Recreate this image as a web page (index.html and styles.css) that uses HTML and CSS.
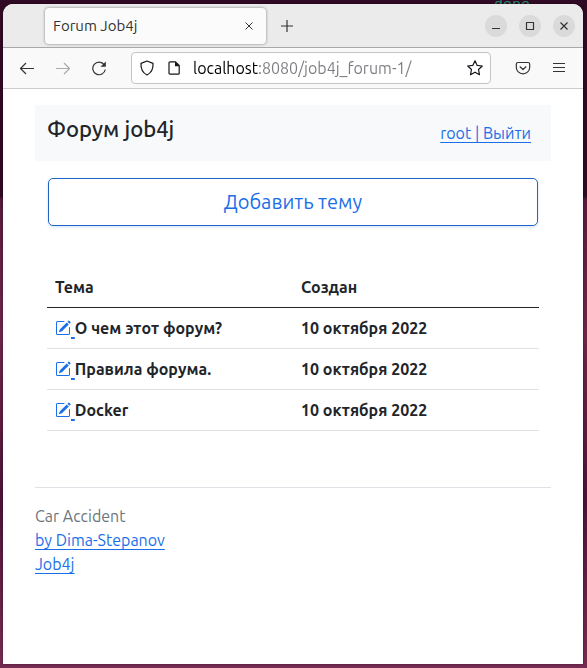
FILE: index.html
```html
<!DOCTYPE html>
<html lang="ru">
<head>
<meta charset="utf-8">
<meta name="viewport" content="width=device-width, initial-scale=1">
<title>Forum Job4j</title>
<link rel="stylesheet" href="styles.css">
</head>
<body>
<svg class="sprite" aria-hidden="true">
  <symbol id="pencil" viewBox="0 0 16 16">
    <path fill="currentColor" d="M15.5 1.94a.5.5 0 0 1 0 .706L14.459 3.69l-2-2L13.502.646a.5.5 0 0 1 .707 0l1.293 1.293zm-1.75 2.456-2-2L4.939 9.21a.5.5 0 0 0-.121.196l-.805 2.414a.25.25 0 0 0 .316.316l2.414-.805a.5.5 0 0 0 .196-.12l6.813-6.814z"/>
    <path fill="currentColor" fill-rule="evenodd" d="M1 13.5A1.5 1.5 0 0 0 2.5 15h11a1.5 1.5 0 0 0 1.5-1.5v-6a.5.5 0 0 0-1 0v6a.5.5 0 0 1-.5.5h-11a.5.5 0 0 1-.5-.5v-11a.5.5 0 0 1 .5-.5H9a.5.5 0 0 0 0-1H2.500A1.500 1.500 0 0 0 1 2.500v11z"/>
  </symbol>
</svg>
<div class="terminal"><span>done</span></div>
<div class="window">
  <div class="tabstrip">
    <div class="tab">
      <span class="tab-title">Forum Job4j</span>
      <button class="tab-close" aria-label="Close tab"><svg width="10" height="10" viewBox="0 0 10 10"><path d="M1.500 1.500l7 7M8.500 1.500l-7 7"/></svg></button>
    </div>
    <button class="new-tab" aria-label="New tab"><svg width="14" height="14" viewBox="0 0 14 14"><path d="M7 1v12M1 7h12"/></svg></button>
    <div class="controls">
      <button aria-label="Minimize"><svg width="10" height="10" viewBox="0 0 10 10"><path d="M1 7.500h8"/></svg></button>
      <button aria-label="Maximize"><svg width="10" height="10" viewBox="0 0 10 10"><path d="M1.500 1.500h7v7h-7z"/></svg></button>
      <button aria-label="Close"><svg width="10" height="10" viewBox="0 0 10 10"><path d="M1.500 1.500l7 7M8.500 1.500l-7 7"/></svg></button>
    </div>
  </div>
  <div class="toolbar">
    <div class="nav">
      <button aria-label="Back"><svg width="16" height="16" viewBox="0 0 16 16"><path d="M15 8.500H1.500M7 3L1.500 8.500 7 14"/></svg></button>
      <button aria-label="Forward" disabled><svg width="16" height="16" viewBox="0 0 16 16"><path d="M1 8.500h13.500M9 3L14.500 8.500 9 14"/></svg></button>
      <button aria-label="Reload"><svg width="16" height="16" viewBox="0 0 16 16"><path d="M13.200 4.700A6.300 6.300 0 1 0 14.300 9.500"/><path class="solid" d="M14.800 1.500v5.200H9.500z"/></svg></button>
    </div>
    <div class="address">
      <svg width="16" height="16" viewBox="0 0 16 16"><path d="M8 1L14 3.400C14.400 9 12 13 8 15 4 13 1.600 9 2 3.400z"/></svg>
      <svg width="14" height="16" viewBox="0 0 14 16"><path d="M3 1.800h5.500l3.700 3.700v7.700a1 1 0 0 1-1 1H3a1 1 0 0 1-1-1V2.800a1 1 0 0 1 1-1z"/><path class="solid" d="M8 1.500v4.700h4.500z"/></svg>
      <input type="text" aria-label="Address" value="localhost:8080/job4j_forum-1/">
      <button aria-label="Bookmark"><svg width="18" height="18" viewBox="0 0 18 18"><path d="M9 1.700l2.200 4.700 5.100.6-3.800 3.500 1 5.200L9 13.200l-4.500 2.500 1-5.200L1.700 7l5.100-.6z"/></svg></button>
    </div>
    <div class="extras">
      <button aria-label="Save to Pocket"><svg width="16" height="16" viewBox="0 0 16 16"><path d="M3 2.500h10a1.700 1.700 0 0 1 1.700 1.700v3a6.700 6.700 0 0 1-13.400 0v-3A1.700 1.700 0 0 1 3 2.500zM4.800 6.500L8 9.500l3.200-3"/></svg></button>
      <button aria-label="Menu"><svg width="14" height="14" viewBox="0 0 14 14"><path d="M1 2.500h12M1 6.500h12M1 10.500h12"/></svg></button>
    </div>
  </div>
  <div class="page">
    <header class="site-header">
      <h1>Форум job4j</h1>
      <a href="#logout">root | Выйти</a>
    </header>
    <main>
      <button class="add">Добавить тему</button>
      <table>
        <thead><tr><th scope="col">Тема</th><th scope="col">Создан</th></tr></thead>
        <tbody>
          <tr><td><a href="#1" aria-label="Править"><svg class="edit"><use href="#pencil"/></svg>&nbsp;</a>О чем этот форум?</td><td>10 октября 2022</td></tr>
          <tr><td><a href="#2" aria-label="Править"><svg class="edit"><use href="#pencil"/></svg>&nbsp;</a>Правила форума.</td><td>10 октября 2022</td></tr>
          <tr><td><a href="#3" aria-label="Править"><svg class="edit"><use href="#pencil"/></svg>&nbsp;</a>Docker</td><td>10 октября 2022</td></tr>
        </tbody>
      </table>
    </main>
    <footer>
      <span>Car Accident</span>
      <a href="#author">by Dima-Stepanov</a>
      <a href="#job4j">Job4j</a>
    </footer>
  </div>
</div>
</body>
</html>
```
FILE: styles.css
```css
* { box-sizing: border-box; }
body {
  margin: 0;
  min-height: 100vh;
  padding: 0 4px 4px 3px;
  display: flex;
  flex-direction: column;
  background: linear-gradient(#300a24 196px, #571a3e 200px, #6c2549 50%, #4c1238 75%, #762b53);
  color: #212529;
  font: 16px/24px Ubuntu, "Noto Sans", sans-serif;
}
.sprite { position: absolute; width: 0; height: 0; }
/* Strip of the terminal that shows above the browser window */
.terminal { height: 4px; padding-right: 53px; overflow: hidden; text-align: right; font: 15px/12px "Liberation Mono", monospace; color: #26896c; }
button { border: 0; padding: 0; background: none; font: inherit; color: inherit; display: flex; align-items: center; justify-content: center; }
svg { flex: none; fill: none; stroke: currentColor; stroke-width: 1.2; stroke-linejoin: round; }
.solid { fill: currentColor; stroke: none; }
a { color: #1a6fe8; text-underline-offset: 3px; }
.window {
  flex: 1;
  display: flex;
  flex-direction: column;
  background: #fff;
  border-radius: 10px 10px 0 0;
  overflow: hidden;
  box-shadow: 0 0 2px #0008;
}
.tabstrip { display: flex; align-items: center; height: 44px; padding: 0 8px 0 42px; background: #ebebeb; border-bottom: 1px solid #a8a8a8; color: #333; }
.tab { display: flex; align-items: center; justify-content: space-between; flex: 0 1 221px; height: 36px; padding: 0 12px 0 8px; background: #fbfbfb; border-radius: 4px; box-shadow: 0 0 3px #0007; font-size: 15px; }
.tab-close svg { stroke-width: 1; }
.new-tab { margin-left: 14px; }
.controls { display: flex; gap: 12px; margin-left: auto; }
.controls button { width: 22px; height: 22px; border-radius: 50%; background: #dadada; }
.toolbar { display: flex; align-items: center; height: 41px; padding: 0 17px 0 16px; background: #f9f9fa; border-bottom: 1px solid #ccc; color: #333; }
.nav { display: flex; gap: 20px; margin-right: 24px; }
.nav :disabled { color: #aaa; }
.address { flex: 1; min-width: 0; display: flex; align-items: center; gap: 12px; height: 32px; padding: 0 6px 0 7px; background: #fff; border: 1px solid #c4c4c6; border-radius: 4px; color: #15141a; }
.address input {
  flex: 1;
  min-width: 0;
  border: 0;
  padding: 0;
  height: 24px;
  font: 16px/24px Ubuntu, "Noto Sans", sans-serif;
  color: transparent;
  background: linear-gradient(90deg, #000 66px, #7b7b80 66px) text;
}
.extras { display: flex; align-items: center; gap: 21px; margin-left: 24px; }
.page { flex: 1; padding: 16px 32px; }
.site-header { display: flex; justify-content: space-between; height: 56px; padding: 8px 20px 0 12px; background: #f8f9fa; }
h1 { margin: 0; font-size: 22px; line-height: 32px; font-weight: 500; }
.site-header a { line-height: 40px; }
main { padding: 17px 12px 56px; }
.add { width: calc(100% - 2px); height: 48px; margin: 0 auto; border: 1px solid #1f66c4; border-radius: 5px; color: #1a6fe8; font-size: 20px; box-shadow: 0 1px 3px #1a6fe833; }
table { width: 100%; margin-top: 41px; border-collapse: collapse; table-layout: fixed; font-weight: 700; text-align: left; }
th, td { padding: 8px; border-bottom: 1px solid #dee2e6; }
th { border-bottom-color: #212529; }
td a { text-decoration-thickness: 2px; }
.edit { width: 16px; height: 16px; stroke: none; vertical-align: -2px; }
footer { display: flex; flex-direction: column; align-items: flex-start; padding-top: 16px; border-top: 1px solid #dee2e6; color: #6c757d; }
```
